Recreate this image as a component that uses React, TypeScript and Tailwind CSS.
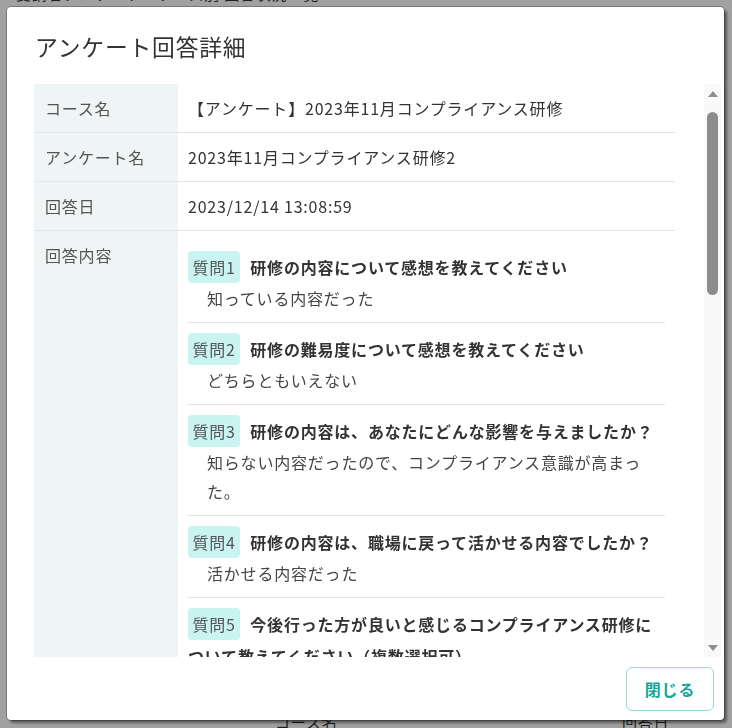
import React from 'react';

type Answer = {
  no: number;
  question: string;
  answer: string;
};

const answers: Answer[] = [
  { no: 1, question: '研修の内容について感想を教えてください', answer: '知っている内容だった' },
  { no: 2, question: '研修の難易度について感想を教えてください', answer: 'どちらともいえない' },
  {
    no: 3,
    question: '研修の内容は、あなたにどんな影響を与えましたか？',
    answer: '知らない内容だったので、コンプライアンス意識が高まった。',
  },
  { no: 4, question: '研修の内容は、職場に戻って活かせる内容でしたか？', answer: '活かせる内容だった' },
  {
    no: 5,
    question: '今後行った方が良いと感じるコンプライアンス研修について教えてください（複数選択可）',
    answer: 'ハラスメント防止、情報セキュリティ',
  },
];

const InfoRow = ({ label, children }: { label: string; children: React.ReactNode }) => (
  <div className="flex border-b border-[#e1e6e6]">
    <div className="w-[144px] shrink-0 bg-[#eff5f5] px-[11px] py-3 leading-6 text-[#555]">{label}</div>
    <div className="flex-1 px-[10px] py-3 leading-6 text-[#333]">{children}</div>
  </div>
);

const ScrollBar = () => (
  <div className="ml-[29px] flex w-[17px] shrink-0 flex-col items-center bg-[#f9f9f9] pt-[7px] pb-[6px]">
    <svg width="10" height="6" viewBox="0 0 10 6">
      <path d="M5 0 L10 6 L0 6 Z" fill="#8f8f8f" />
    </svg>
    <div className="mt-[15px] h-[183px] w-[11px] rounded-full bg-[#8c8c8c]" />
    <div className="flex-1" />
    <svg width="10" height="6" viewBox="0 0 10 6">
      <path d="M0 0 L10 0 L5 6 Z" fill="#8f8f8f" />
    </svg>
  </div>
);

export default function App() {
  return (
    <div className="relative h-screen overflow-hidden bg-white font-['Noto_Sans_CJK_JP',sans-serif] tracking-[0.05em] text-[#333]">
      {/* page behind the dialog */}
      <p className="mt-[-18px] pl-[16px] text-[15px] leading-[24px]">受講者アンケート・ケース別 回答状況一覧</p>
      <div className="mt-[40px] px-[16px]">
        {[0, 1, 2, 3, 4, 5, 6, 7].map((i) => (
          <div key={i} className="h-[82px] border-b border-[#cfcfcf]" />
        ))}
      </div>
      <div className="flex pt-[8px] text-[15px] leading-[24px]">
        <span className="ml-[275px] w-[347px]">コース名</span>
        <span>回答日</span>
      </div>

      {/* dialog */}
      <div className="fixed inset-0 bg-black/[0.37] p-[7px]">
        <div className="flex h-[713px] w-[717px] flex-col rounded-[4px] bg-white shadow-[0_0_0_1px_rgba(0,0,0,0.25),3px_3px_3px_rgba(0,0,0,0.45)]">
          <h2 className="pt-[23px] pl-[28px] text-[22.8px] leading-[34px] font-normal text-[#333]">アンケート回答詳細</h2>

          <div className="mt-[20px] flex h-[573px] pl-[27px]">
            <div className="w-[641px] shrink-0 overflow-hidden text-[16px]">
              <InfoRow label="コース名">【アンケート】2023年11月コンプライアンス研修</InfoRow>
              <InfoRow label="アンケート名">2023年11月コンプライアンス研修2</InfoRow>
              <InfoRow label="回答日">2023/12/14 13:08:59</InfoRow>
              <div className="flex min-h-[400px]">
                <div className="w-[144px] shrink-0 bg-[#eff5f5] px-[11px] py-3 leading-6 text-[#555]">回答内容</div>
                <div className="flex-1 px-[10px] pt-[10px]">
                  {answers.map((a, idx) => (
                    <div
                      key={a.no}
                      className={idx < answers.length - 1 ? 'border-b border-[#e4e4e4] pt-[10px] pb-[9px]' : 'pt-[10px] pb-[9px]'}
                    >
                      <p className="leading-[32px] font-bold text-[#333]">
                        <span className="mr-[10px] inline-block rounded-[4px] bg-[#c9f4f1] px-[4.5px] py-1 align-top leading-6 font-normal text-[#555]">
                          質問{a.no}
                        </span>
                        {a.question}
                      </p>
                      <p className="mt-[1px] pl-[19px] leading-[29px] text-[#444]">{a.answer}</p>
                    </div>
                  ))}
                </div>
              </div>
            </div>
            <ScrollBar />
          </div>

          <div className="flex justify-end pt-[10px] pr-[10px] pb-[9px]">
            <button className="h-[44px] w-[88px] rounded-[6px] border border-[#8fdcd6] bg-white text-[16px] font-bold text-[#17a59d]">
              閉じる
            </button>
          </div>
        </div>
      </div>
    </div>
  );
}
